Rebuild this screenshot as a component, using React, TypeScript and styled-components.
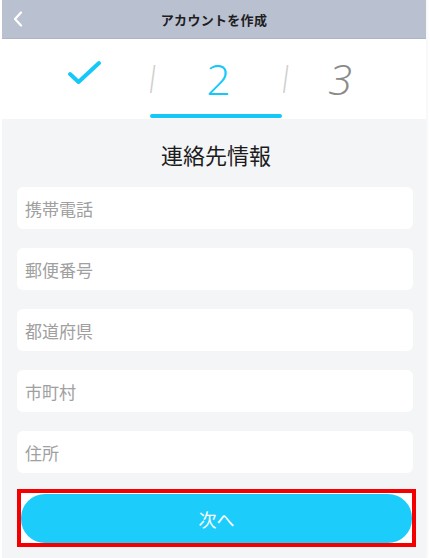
import React from "react";
import styled, { createGlobalStyle } from "styled-components";

const Global = createGlobalStyle`
  html, body { margin: 0; padding: 0; background: #ffffff; }
  body { font-family: "Noto Sans CJK JP", "Noto Sans", sans-serif; }
  * { box-sizing: border-box; }
`;

const Screen = styled.div`
  width: 424px;
  margin-left: 2px;
  height: 558px;
  display: flex;
  flex-direction: column;
  background: #f4f5f7;
  box-shadow: 2px 0 2px rgba(0, 0, 0, 0.03);
`;

const Header = styled.header`
  height: 39px;
  background: #b9c0d0;
  border-bottom: 1px solid #aeb5c6;
  display: grid;
  grid-template-columns: 40px 1fr 40px;
  align-items: center;
`;

const Back = styled.div`
  display: flex;
  align-items: center;
  justify-content: center;
  padding-right: 8px;
`;

const HeaderTitle = styled.h1`
  margin: 0;
  text-align: center;
  font-size: 13px;
  font-weight: 700;
  color: #1e1e22;
  letter-spacing: 0.3px;
`;

const Steps = styled.div`
  height: 80px;
  background: #ffffff;
  display: grid;
  grid-template-columns: 147px 133px 1fr;
  align-items: stretch;
`;

const Step = styled.div`
  position: relative;
  display: flex;
  align-items: center;
  justify-content: center;
  padding-bottom: 4px;
`;

const Underline = styled.div`
  position: absolute;
  left: 1px;
  right: 0;
  bottom: 1px;
  height: 4px;
  border-radius: 2px;
  background: #14c8fa;
`;

const Slash = styled.span`
  position: absolute;
  left: 1px;
  top: 22px;
  font-family: "Liberation Sans", sans-serif;
  font-size: 38px;
  font-weight: 300;
  color: #cfcfcf;
  line-height: 1;
  transform: scaleX(0.5);
  transform-origin: left;
`;

const Digit = styled.span<{ $color: string; $italic?: boolean }>`
  font-family: "Open Sans", "Liberation Sans", sans-serif;
  font-weight: 300;
  font-style: ${(p) => (p.$italic ? "italic" : "normal")};
  font-size: 43px;
  line-height: 1;
  color: ${(p) => p.$color};
  margin-top: 2px;
`;

const ActiveDigit = styled(Digit)`
  margin-left: 6px;
`;

const NextDigit = styled(Digit)`
  margin-right: 28px;
`;

const CheckBox = styled.div`
  margin-left: 18px;
  margin-top: -6px;
  display: flex;
`;

const Form = styled.main`
  flex: 1;
  display: flex;
  flex-direction: column;
  padding: 23px 11px 0 15px;
`;

const Title = styled.h2`
  margin: 0 0 20px;
  text-align: center;
  font-size: 22px;
  line-height: 25px;
  font-weight: 400;
  color: #1c1c1c;
`;

const Fields = styled.div`
  display: flex;
  flex-direction: column;
  gap: 19px;
`;

const Input = styled.input`
  height: 42px;
  width: 396px;
  border: none;
  border-radius: 6px;
  background: #ffffff;
  padding: 0 8px;
  font-family: "Noto Sans CJK JP", sans-serif;
  font-size: 17px;
  color: #333;
  outline: none;
  &::placeholder { color: #a0a0a0; }
`;

const Highlight = styled.div`
  margin-top: 16px;
  width: 399px;
  height: 58px;
  border: 4px solid #f40000;
  background: #ffffff;
  display: flex;
  padding-top: 1px;
`;

const NextButton = styled.button`
  flex: 1;
  border: none;
  border-radius: 24px;
  background: #1ccdfc;
  color: #ffffff;
  font-family: "Noto Sans CJK JP", sans-serif;
  font-size: 18px;
  padding: 0;
  cursor: pointer;
`;

const fields = ["携帯電話", "郵便番号", "都道府県", "市町村", "住所"];

export default function App() {
  return (
    <>
      <Global />
      <Screen>
        <Header>
          <Back>
            <svg width="10" height="16" viewBox="0 0 10 16">
              <path d="M8 1.5 L2 8 L8 14.5" fill="none" stroke="#ffffff" strokeWidth="2.2" strokeLinecap="round" strokeLinejoin="round" />
            </svg>
          </Back>
          <HeaderTitle>アカウントを作成</HeaderTitle>
          <div />
        </Header>
        <Steps>
          <Step>
            <CheckBox>
              <svg width="36" height="28" viewBox="0 0 36 28">
                <path d="M3 14 L11.5 22 L32 3" fill="none" stroke="#14c8fa" strokeWidth="4" strokeLinecap="round" strokeLinejoin="round" />
              </svg>
            </CheckBox>
          </Step>
          <Step>
            <Slash>/</Slash>
            <ActiveDigit $color="#14c8fa">2</ActiveDigit>
            <Underline />
          </Step>
          <Step>
            <Slash>/</Slash>
            <NextDigit $color="#8a8a8a" $italic>3</NextDigit>
          </Step>
        </Steps>
        <Form>
          <Title>連絡先情報</Title>
          <Fields>
            {fields.map((f) => (
              <Input key={f} placeholder={f} />
            ))}
          </Fields>
          <Highlight>
            <NextButton>次へ</NextButton>
          </Highlight>
        </Form>
      </Screen>
    </>
  );
}
